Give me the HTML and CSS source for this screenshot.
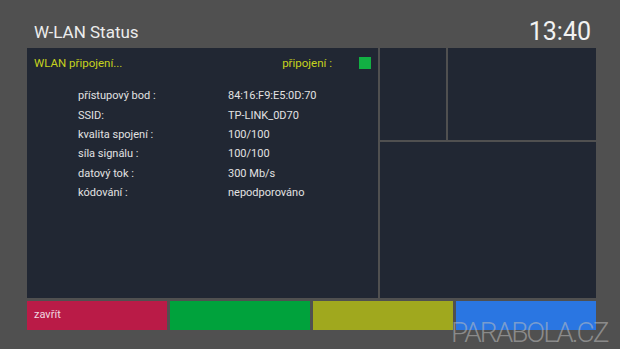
FILE: index.html
```html
<!DOCTYPE html>
<html>
<head>
<meta charset="utf-8">
<link rel="stylesheet" href="styles.css">
</head>
<body>
<div class="screen">
  <div class="topbar">
    <div class="title">W-LAN Status</div>
    <div class="clock">13:40</div>
  </div>
  <div class="grid">
    <div class="cell main">
      <div class="head">
        <span class="status">WLAN připojení...</span>
        <span class="conn">připojení :<span class="led"></span></span>
      </div>
      <div class="rows">
        <div class="row"><span class="lbl">přístupový bod :</span><span class="val">84:16:F9:E5:0D:70</span></div>
        <div class="row"><span class="lbl">SSID:</span><span class="val">TP-LINK_0D70</span></div>
        <div class="row"><span class="lbl">kvalita spojení :</span><span class="val">100/100</span></div>
        <div class="row"><span class="lbl">síla signálu :</span><span class="val">100/100</span></div>
        <div class="row"><span class="lbl">datový tok :</span><span class="val">300 Mb/s</span></div>
        <div class="row"><span class="lbl">kódování :</span><span class="val">nepodporováno</span></div>
      </div>
    </div>
    <div class="cell small"></div>
    <div class="cell wide"></div>
    <div class="cell bottom"></div>
  </div>
  <div class="buttons">
    <div class="btn red">zavřít</div>
    <div class="btn green"></div>
    <div class="btn olive"></div>
    <div class="btn blue"></div>
  </div>
  <div class="watermark">PARABOLA.CZ</div>
</div>
</body>
</html>
```
FILE: styles.css
```css
html, body {
  margin: 0;
  padding: 0;
  background: #505050;
}
.screen {
  position: relative;
  width: 620px;
  height: 349px;
  overflow: hidden;
  font-family: Roboto, "Liberation Sans", sans-serif;
  color: #e6e6e6;
}
.topbar {
  height: 48px;
  display: flex;
  justify-content: space-between;
  align-items: flex-end;
  padding: 0 29px 0 34px;
  box-sizing: border-box;
}
.title {
  font-size: 17px;
  line-height: 20px;
  margin-bottom: 6px;
  color: #ececec;
}
.clock {
  font-size: 25px;
  line-height: 26px;
  margin-bottom: 3px;
  color: #f2f2f2;
}
.grid {
  margin-left: 27px;
  width: 569px;
  display: grid;
  grid-template-columns: 351px 66px 148px;
  grid-template-rows: 92px 156px;
  gap: 2px;
}
.cell {
  background: #212733;
}
.main {
  grid-row: 1 / 3;
  padding: 7px 7px 0 7px;
  box-sizing: border-box;
}
.wide { grid-column: 3; }
.bottom { grid-column: 2 / 4; }
.head {
  display: flex;
  justify-content: space-between;
  align-items: center;
  height: 15px;
  font-size: 11.5px;
  color: #c6d21e;
}
.conn {
  display: flex;
  align-items: center;
  padding-left: 0;
}
.led {
  display: inline-block;
  width: 12px;
  height: 12px;
  background: #12b043;
  margin-left: 27px;
}
.rows {
  margin-top: 16px;
  padding-left: 44px;
  display: flex;
  flex-direction: column;
}
.row {
  display: flex;
  height: 19.4px;
  align-items: center;
  font-size: 11px;
  color: #e2e2e2;
}
.lbl {
  width: 150px;
}
.buttons {
  margin: 3px 0 0 27px;
  width: 569px;
  height: 29px;
  display: flex;
  gap: 3px;
}
.btn {
  flex: 1;
  font-size: 11px;
  padding: 7px 0 0 7px;
  box-sizing: border-box;
  color: #f0d8e0;
}
.red { background: #ba1b47; }
.green { background: #00a23c; }
.olive { background: #a0a81e; }
.blue { background: #2a76e2; }
.watermark {
  position: absolute;
  left: 451px;
  top: 318px;
  font-size: 28px;
  font-weight: 300;
  letter-spacing: -2px;
  color: rgba(190, 190, 190, 0.55);
  line-height: 30px;
}
```
